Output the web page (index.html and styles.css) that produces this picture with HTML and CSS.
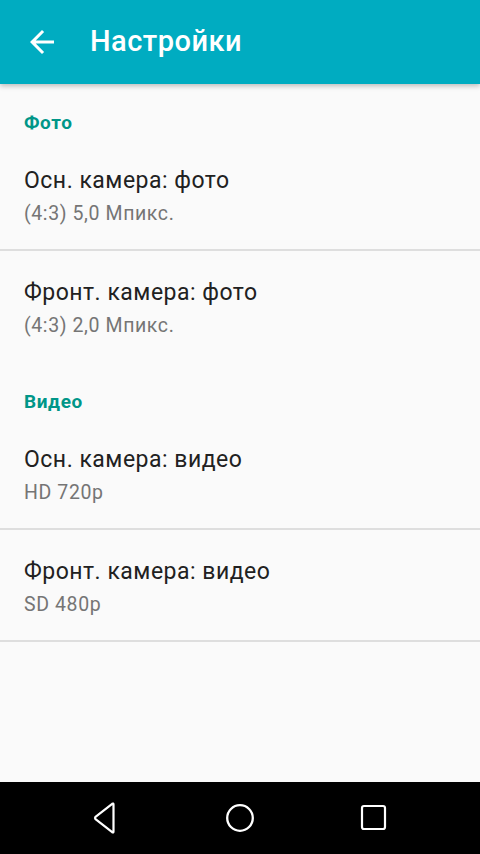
FILE: index.html
```html
<!DOCTYPE html>
<html lang="ru">
<head>
    <meta charset="UTF-8">
    <meta name="viewport" content="width=device-width, initial-scale=1.0">
    <title>Настройки</title>
    <link rel="stylesheet" href="styles.css">
</head>
<body>
    <div class="screen">
        <header class="app-bar">
            <button class="back-btn" aria-label="Назад">
                <svg width="36" height="36" viewBox="0 0 24 24">
                    <path d="M20 11H7.83l5.59-5.59L12 4l-8 8 8 8 1.41-1.41L7.83 13H20v-2z" fill="#fff"/>
                </svg>
            </button>
            <h1 class="app-title">Настройки</h1>
        </header>

        <main class="settings">
            <div class="category">Фото</div>
            <div class="pref">
                <div class="pref-title">Осн. камера: фото</div>
                <div class="pref-summary">(4:3) 5,0 Мпикс.</div>
            </div>
            <div class="pref no-divider">
                <div class="pref-title">Фронт. камера: фото</div>
                <div class="pref-summary">(4:3) 2,0 Мпикс.</div>
            </div>

            <div class="category">Видео</div>
            <div class="pref">
                <div class="pref-title">Осн. камера: видео</div>
                <div class="pref-summary">HD 720p</div>
            </div>
            <div class="pref">
                <div class="pref-title">Фронт. камера: видео</div>
                <div class="pref-summary">SD 480p</div>
            </div>
        </main>

        <nav class="nav-bar">
            <svg width="30" height="34" viewBox="0 0 30 34">
                <path d="M22.5 3.5 L22.5 30.5 Q22.5 32 21.2 31.2 L4.5 18.2 Q3.5 17 4.5 15.8 L21.2 2.8 Q22.5 2 22.5 3.5 Z" fill="none" stroke="#fff" stroke-width="2.2" stroke-linejoin="round"/>
            </svg>
            <svg width="30" height="30" viewBox="0 0 30 30">
                <circle cx="15" cy="15" r="12.8" fill="none" stroke="#fff" stroke-width="2.3"/>
            </svg>
            <svg width="30" height="30" viewBox="0 0 30 30">
                <rect x="3" y="3" width="23" height="23" rx="2" fill="none" stroke="#fff" stroke-width="2.2"/>
            </svg>
        </nav>
    </div>
</body>
</html>
```

FILE: styles.css
```css
html, body {
    margin: 0;
    padding: 0;
}
body {
    font-family: Roboto, "Noto Sans", Arial, sans-serif;
    background-color: #fafafa;
    color: #212121;
}
.screen {
    display: flex;
    flex-direction: column;
    height: 854px;
}
.app-bar {
    display: flex;
    align-items: center;
    height: 84px;
    flex-shrink: 0;
    background-color: #00acc1;
    box-shadow: 0 2px 5px rgba(0, 0, 0, 0.25);
    position: relative;
    z-index: 1;
}
.back-btn {
    display: flex;
    align-items: center;
    justify-content: center;
    width: 36px;
    height: 36px;
    margin-left: 24px;
    padding: 0;
    border: none;
    background: none;
}
.app-title {
    margin: 0 0 2px 30px;
    font-size: 29px;
    font-weight: 500;
    color: #fff;
    letter-spacing: 0.5px;
}
.settings {
    flex: 1;
}
.category {
    padding: 27px 24px 4px;
    line-height: 24px;
    font-size: 19px;
    font-weight: 700;
    color: #009688;
    letter-spacing: 0.6px;
}
.pref {
    padding: 28px 24px 23px;
    border-bottom: 2px solid #dedede;
}
.pref.no-divider {
    border-bottom-color: transparent;
}
.pref-title {
    font-size: 23px;
    line-height: 28px;
    color: #212121;
    letter-spacing: 0.5px;
}
.pref-summary {
    margin-top: 7px;
    font-size: 19.5px;
    line-height: 24px;
    color: #757575;
    letter-spacing: 0.6px;
}
.nav-bar {
    display: flex;
    align-items: center;
    justify-content: center;
    gap: 104px;
    height: 72px;
    flex-shrink: 0;
    background-color: #000;
}
```
